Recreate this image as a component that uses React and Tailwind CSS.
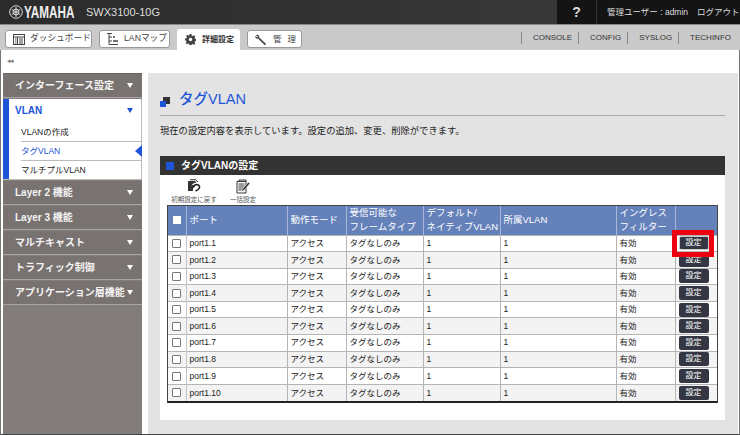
import React from "react";

const ff = "font-['Liberation_Sans','Noto_Sans_CJK_JP',sans-serif]";

const Dash = () => (
  <svg width="14" height="13" viewBox="0 0 14 13" fill="none" stroke="#444" strokeWidth="1" className="shrink-0">
    <rect x="1.5" y="1.5" width="11" height="10" />
    <path d="M1.5 4h11M5.500 4v7.500M7 6h4M7 8h4M7 10h4M3 6h1.500M3 8h1.500M3 10h1.500" />
  </svg>
);
const Lan = () => (
  <svg width="13" height="14" viewBox="0 0 13 14" fill="none" stroke="#444" strokeWidth="1" className="shrink-0">
    <path d="M1 1.500h5M3 1.500V12.500M3 5h3M3 9h3M3 12.500h9" />
    <path d="M7 5h2M7 9h5" strokeWidth="1.400" />
  </svg>
);
const Gear = () => (
  <svg width="11" height="11" viewBox="0 0 13 13" className="shrink-0">
    <path fill="#444" d="M5.400 0h2.200l.3 1.800 1.300.6 1.500-1 1.600 1.500-1 1.600.5 1.200 1.800.3v2.100l-1.800.4-.5 1.200 1 1.500-1.600 1.600-1.500-1-1.300.5-.3 1.700H5.400L5 11.700l-1.200-.5-1.500 1L.8 10.600l1-1.500-.5-1.200L0 7.500V5.400l1.800-.3.5-1.200-1-1.600 1.500-1.500 1.500 1L5 1.800z" />
    <circle cx="6.500" cy="6.500" r="2" fill="#fff" />
  </svg>
);
const Wrench = () => (
  <svg width="11" height="11" viewBox="0 0 13 13" className="shrink-0">
    <path fill="#444" d="M1 1.500 3 .5l2 2-.2 1.400 7.700 7.200c.5.5.5 1 .1 1.500s-1 .5-1.500 0L3.500 5.300 2 5.500 0 3.500l.8-1.200L2.500 4l1-.8z" />
  </svg>
);
const Reset = () => (
  <svg width="14" height="14" viewBox="0 0 14 14" className="shrink-0">
    <path d="M1 2h7l2.500 2.500V6H6v6H1z" fill="#333" />
    <path d="M3 .7h5.500L11 3" fill="none" stroke="#333" strokeWidth="1" />
    <path d="M6 7.500c1.500-3 6.500-3 7 0 .4 2.500-1.500 4-4.500 5" fill="none" stroke="#fff" strokeWidth="3.500" />
    <path d="M6.500 7.500c1.500-2.500 5.500-2.500 6 0 .4 2-1.500 3.500-4 4.500" fill="none" stroke="#222" strokeWidth="1.600" />
    <path d="M4.500 6l4 .4-2.500 3.200z" fill="#222" />
  </svg>
);
const Bulk = () => (
  <svg width="14" height="15" viewBox="0 0 14 15" fill="none" stroke="#333" strokeWidth="1" className="shrink-0">
    <path d="M3 2.500V1h7v1.500" />
    <path d="M1 2.500h9v11.500H1z" fill="#fff" />
    <path d="M2.500 5h6M2.500 7h6M2.500 9h5M2.500 11h4" />
    <path d="M12.500 3 6.500 10l-.8 2.500 2.500-1.200L13.800 4.500z" fill="#333" stroke="#fff" strokeWidth=".5" />
  </svg>
);

const Caret = ({ blue }) => (
  <span className={`ml-auto h-0 w-0 shrink-0 border-x-[3.5px] border-t-[5px] border-x-transparent ${blue ? "border-t-[#1d55d8]" : "border-t-white"}`} />
);

const Menu = ({ children }) => (
  <div className="mb-px flex h-[24px] shrink-0 items-center border-b border-[#a8a4a3] bg-[#787270] pl-[12px] pr-[9px] text-[10px] font-bold text-[#f4f4f4]">
    <span className="whitespace-nowrap">{children}</span>
    <Caret />
  </div>
);

const rows = Array.from({ length: 10 }, (_, i) => `port1.${i + 1}`);

const btn = "mb-[2px] flex h-[18px] shrink-0 items-center rounded-[3px] border border-[#999] bg-white";

export default function App() {
  return (
    <div className={`${ff} flex h-[435px] w-[740px] flex-col overflow-hidden bg-white text-[#222]`}>
      <header className="flex h-[24px] shrink-0 bg-gradient-to-r from-[#2b2b2b] to-[#3c3c3c]">
        <div className="flex items-center pl-[9px]">
          <svg width="14" height="14" viewBox="0 0 14 14" fill="none" stroke="#ddd" strokeWidth="1" className="shrink-0">
            <circle cx="7" cy="7" r="6.300" />
            <path d="M7 2v10M2.700 4.500l8.600 5M2.700 9.500l8.600-5" />
            <circle cx="7" cy="7" r="3" />
          </svg>
          <span className="ml-[1px] block w-[49px] origin-left scale-x-[.71] whitespace-nowrap text-[16.500px] font-bold text-[#eee]">YAMAHA</span>
          <span className="ml-[13px] whitespace-nowrap text-[11px] text-[#ddd]">SWX3100-10G</span>
        </div>
        <div className="ml-auto flex w-[183px] shrink-0 items-center bg-[#141414]">
          <span className="flex h-full w-[40px] shrink-0 items-center justify-center border-r border-[#333] text-[14px] font-bold text-[#ddd]">?</span>
          <span className="ml-[10px] whitespace-nowrap text-[8.500px] text-[#ddd]">管理ユーザー : admin</span>
          <span className="ml-[9px] whitespace-nowrap text-[8.500px] text-[#ddd]">ログアウト</span>
        </div>
      </header>

      <nav className="flex h-[26px] shrink-0 items-end border-t border-[#888] bg-[#cacaca] pl-[5px]">
        <div className={`${btn} mr-[7px] w-[87px] pl-[6px] text-[8.700px]`}>
          <Dash /><span className="ml-[4px] whitespace-nowrap text-[#444]">ダッシュボード</span>
        </div>
        <div className={`${btn} mr-[7px] w-[71px] pl-[6px] text-[8.700px]`}>
          <Lan /><span className="ml-[5px] whitespace-nowrap text-[#444]">LANマップ</span>
        </div>
        <div className="mr-[7px] flex h-[21px] w-[63px] shrink-0 items-center rounded-t-[3px] bg-white pl-[8px] text-[8px] font-bold">
          <Gear /><span className="ml-[6px] whitespace-nowrap text-[#333]">詳細設定</span>
        </div>
        <div className={`${btn} w-[55px] pl-[7px] text-[8.500px]`}>
          <Wrench /><span className="ml-[7px] whitespace-nowrap tracking-[6px] text-[#444]">管理</span>
        </div>
        <div className="ml-auto flex h-full items-center pr-[9px] text-[8px] text-[#333]">
          <span className="border-l border-[#888] pl-[11px] pr-[6px]">CONSOLE</span>
          <span className="border-l border-[#888] pl-[11px] pr-[6px]">CONFIG</span>
          <span className="border-l border-[#888] pl-[11px] pr-[6px]">SYSLOG</span>
          <span className="border-l border-[#888] pl-[11px]">TECHINFO</span>
        </div>
      </nav>

      <div className="flex min-h-0 flex-1 flex-col border-x border-b border-x-[#777] border-b-[#444]">
        <div className="flex h-[23px] shrink-0 items-center pl-[6px] text-[7px] tracking-[-1px] text-[#777]">◂◂</div>

        <div className="flex min-h-0 flex-1 pl-[2px] pr-[1px]">
          <aside className="mr-[6px] flex w-[139px] shrink-0 flex-col border-t border-[#666] bg-[#827c7a]">
            <Menu>インターフェース設定</Menu>
            <div className="mb-px flex h-[81px] shrink-0 flex-col border border-l-0 border-t-0 border-[#bbb] bg-white">
              <div className="flex h-[23px] shrink-0 items-center border-l-[6px] border-[#1d55d8] pl-[6px] pr-[8px] text-[10px] font-bold text-[#1d55d8]">
                VLAN<Caret blue />
              </div>
              <div className="flex flex-1 flex-col border-l-[6px] border-[#1d55d8] pt-[1px] text-[8.500px]">
                <div className="ml-[12px] flex flex-1 items-center border-b border-[#bbb]">VLANの作成</div>
                <div className="relative ml-[12px] flex flex-1 items-center border-b border-[#bbb] text-[#1d55d8]">
                  タグVLAN
                  <span className="absolute right-[-1px] top-[3px] h-[12px] w-[7px] bg-[#1d55d8] [clip-path:polygon(100%_0,100%_100%,0_50%)]" />
                </div>
                <div className="ml-[12px] flex flex-1 items-center">マルチプルVLAN</div>
              </div>
            </div>
            <Menu>Layer 2 機能</Menu>
            <Menu>Layer 3 機能</Menu>
            <Menu>マルチキャスト</Menu>
            <Menu>トラフィック制御</Menu>
            <Menu>アプリケーション層機能</Menu>
          </aside>

          <main className="flex min-w-0 flex-1 flex-col bg-[#e3e3e3] pl-[12px] pr-[13px]">
            <div className="flex h-[43px] shrink-0 items-center border-b border-[#aaa] pt-[11px]">
              <svg width="11" height="11" viewBox="0 0 11 11" className="mt-[3px] shrink-0">
                <rect x="3" y="1" width="7" height="7" fill="#333" />
                <rect x="0" y="5" width="6" height="6" fill="#1d55d8" />
              </svg>
              <span className="ml-[8px] text-[14.500px] font-medium text-[#1d55d8]">タグVLAN</span>
            </div>
            <p className="mt-[8px] h-[19px] shrink-0 whitespace-nowrap text-[9.300px] leading-[14px]">現在の設定内容を表示しています。設定の追加、変更、削除ができます。</p>
            <section className="relative mt-[13px] flex h-[264px] shrink-0 flex-col bg-white">
              <div className="flex h-[19px] shrink-0 items-center bg-[#333] pl-[6px] text-[10px] font-bold text-white">
                <span className="mr-[7px] h-[8px] w-[8px] bg-[#1d55d8]" />タグVLANの設定
              </div>
              <div className="flex h-[30px] shrink-0 items-start pl-[13px] pt-[4px] text-[6.500px] text-[#555]">
                <div className="flex w-[42px] flex-col items-center"><Reset /><span className="mt-[2px] whitespace-nowrap">初期設定に戻す</span></div>
                <div className="ml-[15px] flex w-[26px] flex-col items-center"><Bulk /><span className="mt-[1px] whitespace-nowrap">一括設定</span></div>
              </div>
              <div className="mx-[7px] border-x border-t border-b-2 border-[#444] border-b-[#222]">
                <table className="w-[549px] table-fixed border-collapse text-[8.500px]">
                  <colgroup>
                    <col className="w-[18px]" /><col className="w-[101px]" /><col className="w-[59px]" /><col className="w-[77px]" /><col className="w-[77px]" /><col className="w-[116px]" /><col className="w-[59px]" /><col className="w-[42px]" />
                  </colgroup>
                  <thead>
                    <tr className="h-[29px] bg-[#6581ba] text-left text-[9.500px] leading-[14px] text-white">
                      <th className="border-r border-[#a9b8d8] font-normal"><span className="mx-auto block h-[8px] w-[8px] bg-white" /></th>
                      <th className="border-r border-[#a9b8d8] pl-[3px] font-normal">ポート</th>
                      <th className="whitespace-nowrap border-r border-[#a9b8d8] pl-[3px] font-normal">動作モード</th>
                      <th className="whitespace-nowrap border-r border-[#a9b8d8] pl-[3px] font-normal">受信可能な<br />フレームタイプ</th>
                      <th className="whitespace-nowrap border-r border-[#a9b8d8] pl-[3px] font-normal">デフォルト/<br />ネイティブVLAN</th>
                      <th className="border-r border-[#a9b8d8] pl-[3px] font-normal">所属VLAN</th>
                      <th className="whitespace-nowrap border-r border-[#a9b8d8] pl-[3px] font-normal">イングレス<br />フィルター</th>
                      <th />
                    </tr>
                  </thead>
                  <tbody>
                    {rows.map((p, i) => (
                      <tr key={p} className={`h-[16.6px] border-t border-[#b5b5b5] ${i % 2 ? "bg-[#f3f3f3]" : "bg-white"}`}>
                        <td className="border-r border-[#c4c4c4] p-0"><span className="mx-auto block h-[9px] w-[9px] rounded-[1px] border border-[#777] bg-white" /></td>
                        <td className="border-r border-[#b5b5b5] p-0 pl-[3px]">{p}</td>
                        <td className="border-r border-[#b5b5b5] p-0 pl-[3px]">アクセス</td>
                        <td className="border-r border-[#b5b5b5] p-0 pl-[3px]">タグなしのみ</td>
                        <td className="border-r border-[#b5b5b5] p-0 pl-[3px]">1</td>
                        <td className="border-r border-[#b5b5b5] p-0 pl-[3px]">1</td>
                        <td className="border-r border-[#b5b5b5] p-0 pl-[3px]">有効</td>
                        <td className="p-0">
                          <span className={`ml-[3px] flex h-[14px] w-[30px] items-center justify-center rounded-[2px] bg-[#343743] text-[8px] text-white ${i === 0 ? "border border-[#ccc]" : ""}`}>設定</span>
                        </td>
                      </tr>
                    ))}
                  </tbody>
                </table>
              </div>
              <span className="absolute left-[512px] top-[74px] h-[27px] w-[42px] border-[5px] border-[#ee0011]" />
            </section>
          </main>
        </div>
      </div>
    </div>
  );
}
